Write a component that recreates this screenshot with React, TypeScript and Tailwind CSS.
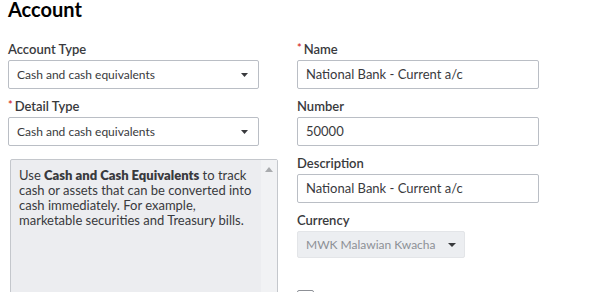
import React from "react";

const Arrow = ({ w = 7, h = 4 }: { w?: number; h?: number }) => (
  <svg width={w} height={h} viewBox={`0 0 ${w} ${h}`} className="shrink-0">
    <path d={`M0 0 L${w} 0 L${w / 2} ${h} Z`} fill="#393a3d" />
  </svg>
);

const Label = ({ text, req }: { text: string; req?: boolean }) => (
  <div className="h-[18px] leading-[18px] text-[13px] font-semibold text-[#393a3d] mb-[2px] flex items-center">
    {req && <span className="text-[#d52b1e] text-[11px] mr-[2px] -mt-[3px]">*</span>}
    <span>{text}</span>
  </div>
);

const Select = ({ value }: { value: string }) => (
  <div className="h-[29px] border border-[#babec5] rounded-[2px] bg-white flex items-center justify-between pl-[8px] pr-[10px] text-[12px] text-[#393a3d]">
    <span>{value}</span>
    <Arrow />
  </div>
);

const Input = ({ value }: { value: string }) => (
  <div className="h-[29px] border border-[#babec5] rounded-[2px] bg-white flex items-center pl-[8px] text-[13px] text-[#393a3d]">
    {value}
  </div>
);

export default function App() {
  return (
    <div
      className="w-[591px] h-[292px] overflow-hidden bg-white text-[#393a3d]"
      style={{ fontFamily: 'Lato, "Noto Sans", sans-serif' }}
    >
      <div className="h-[20px] pt-[2px] pl-[8px] leading-[14px] text-[20px] font-bold text-[#000]">Account</div>
      <div className="flex pl-[8px] pt-[20px]">
        <div className="w-[251px] shrink-0">
          <Label text="Account Type" />
          <Select value="Cash and cash equivalents" />
          <div className="h-[8px]" />
          <Label text="Detail Type" req />
          <Select value="Cash and cash equivalents" />
          <div className="ml-[2px] mt-[13px] w-[268px] h-[140px] border border-[#c4c7cc] rounded-[2px] bg-[#ecedf0] flex">
            <div className="flex-1 pl-[8px] pr-[6px] pt-[8px] text-[13px] leading-[15px] text-[#393a3d]">
              Use <b className="font-extrabold">Cash and Cash Equivalents</b> to track cash or assets that can be converted into cash immediately. For example, marketable securities and Treasury bills.
            </div>
            <div className="w-[16px] bg-[#f1f2f4] flex justify-center pt-[7px]">
              <svg width="8" height="5" viewBox="0 0 8 5">
                <path d="M0 5 L8 5 L4 0 Z" fill="#a9abae" />
              </svg>
            </div>
          </div>
        </div>
        <div className="w-[242px] ml-[38px] shrink-0">
          <Label text="Name" req />
          <Input value="National Bank - Current a/c" />
          <div className="h-[8px]" />
          <Label text="Number" />
          <Input value="50000" />
          <div className="h-[8px]" />
          <Label text="Description" />
          <Input value="National Bank - Current a/c" />
          <div className="h-[8px]" />
          <Label text="Currency" />
          <div className="w-[168px] h-[27px] border border-[#e3e5e8] rounded-[2px] bg-[#eceef1] flex items-center justify-between pl-[8px] pr-[8px] text-[12px] text-[#8d9096]">
            <span>MWK Malawian Kwacha</span>
            <Arrow w={8} h={4} />
          </div>
          <div className="mt-[32px] w-[17px] h-[17px] border border-[#8d9096] rounded-[2px] bg-white" />
        </div>
      </div>
    </div>
  );
}
